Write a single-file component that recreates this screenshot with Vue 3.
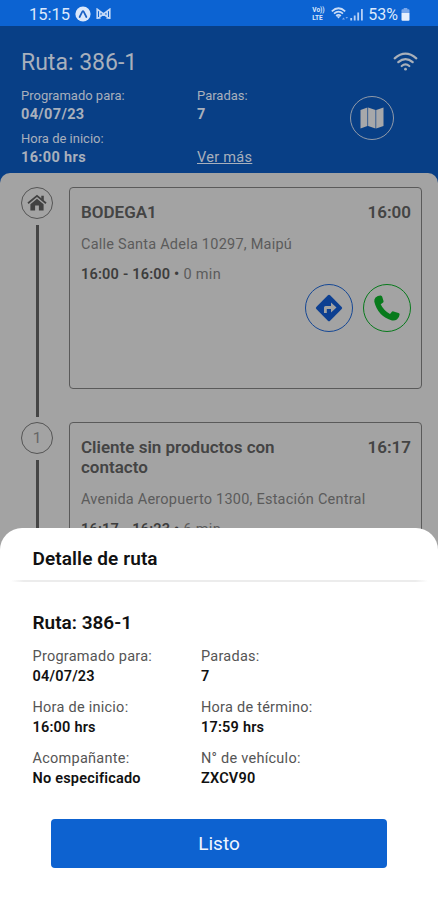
<script setup>
const headerFields = [
  { label: 'Programado para:', value: '04/07/23' },
  { label: 'Paradas:', value: '7' },
  { label: 'Hora de inicio:', value: '16:00 hrs' }
]
const stops = [
  { marker: 'home', name: 'BODEGA1', time: '16:00', address: 'Calle Santa Adela 10297, Maipú', range: '16:00 - 16:00', wait: '0 min' },
  { marker: '1', name: 'Cliente sin productos con contacto', time: '16:17', address: 'Avenida Aeropuerto 1300, Estación Central', range: '16:17 - 16:23', wait: '6 min' }
]
const details = [
  { label: 'Programado para:', value: '04/07/23' },
  { label: 'Paradas:', value: '7' },
  { label: 'Hora de inicio:', value: '16:00 hrs' },
  { label: 'Hora de término:', value: '17:59 hrs' },
  { label: 'Acompañante:', value: 'No especificado' },
  { label: 'N° de vehículo:', value: 'ZXCV90' }
]
</script>

<template>
  <div class="screen">
    <div class="status">
      <span class="clock">15:15</span>
      <svg class="app-icon" viewBox="0 0 16 16"><circle cx="8" cy="8" r="7.6" fill="#dbe8fb" /><path d="M4.600 11 7.300 5.600Q8 4.500 8.700 5.600L11.400 11" fill="none" stroke="#1c62c4" stroke-width="1.700" stroke-linecap="round" /></svg>
      <svg class="mail-icon" viewBox="0 0 15 12"><path d="M1.200 11V1.200L7.500 6l6.300-4.800V11M3.800 10.800V3.500M11.200 10.800V3.500M1.500 10.500 7.500 6l6 4.500" fill="none" stroke="#c3d8f6" stroke-width="1.600" /></svg>
      <span class="spacer"></span>
      <span class="volte"><span>Vo))</span><span>LTE</span></span>
      <svg class="status-wifi" viewBox="0 0 18 14"><g fill="none" stroke="#c9dcf7" stroke-width="1.700"><path d="M.8 4.300Q7.500-1.800 14.200 4.300" /><path d="M3 6.600q4.500-3.900 9 0" /><path d="M5.100 8.800q2.400-2 4.800 0" /></g><path d="m5.500 9.300 2 2.200 2-2.200z" fill="#c9dcf7" /><path d="M11 12.500l1.500-2 1.500 2zM14.500 10h2.500l-1.200 1.800z" fill="#7fabec" /></svg>
      <svg class="signal" viewBox="0 0 14 13"><path d="M1.200 12.500v-2.500M4.700 12.500V7.500M8.200 12.500V4.500M11.900 12.500V1" stroke="#b7d0f5" stroke-width="1.800" /></svg>
      <span class="percent">53%</span>
      <svg class="battery" viewBox="0 0 9 13"><path d="M2.700 0h3.600v1.300h1.200q1 0 1 1V5h-8V2.300q0-1 1-1h1.200z" fill="#7aa8ec" /><path d="M.5 5h8v6.800q0 1-1 1h-6q-1 0-1-1z" fill="#e8f0fd" /></svg>
    </div>

    <header class="header">
      <div class="header-top">
        <h1>Ruta: 386-1</h1>
        <svg class="wifi" viewBox="0 0 25 20"><g fill="none" stroke="#a9b0ba" stroke-width="2.200" stroke-linecap="round"><path d="M1.700 6.300Q12.500-3 23.300 6.300" /><path d="M5.300 10.200q7.200-6.200 14.400 0" /><path d="M8.700 14q3.800-3.200 7.600 0" /></g><circle cx="12.500" cy="17.200" r="1.400" fill="#a9b0ba" /></svg>
      </div>
      <div class="header-body">
        <div class="header-grid">
          <div v-for="f in headerFields" :key="f.label" class="hfield">
            <span>{{ f.label }}</span><b>{{ f.value }}</b>
          </div>
          <a class="more">Ver más</a>
        </div>
        <div class="map-button">
          <svg viewBox="0 0 24 22"><g fill="#a7a8aa"><path d="M.5 3 7.400.6v18.300L.5 21.500z" /><path d="m8.100.6 7.400 2.400v18.400l-7.400-2.400z" /><path d="M16.200 3 23.500.5V19l-7.300 2.500z" /></g></svg>
        </div>
      </div>
    </header>

    <main class="route">
      <div v-for="s in stops" :key="s.name" class="stop">
        <div class="rail">
          <div class="marker">
            <svg v-if="s.marker === 'home'" viewBox="0 0 20 18"><path d="M1 9.300 10 1.800l9 7.500" fill="none" stroke="#414141" stroke-width="1.800" /><path d="M14.300 1.800h2.500v5l-2.500-2zM10 4.800l6.600 5.500v6.200h-4.700v-5H8.100v5H3.400v-6.200z" fill="#414141" /></svg>
            <span v-else>{{ s.marker }}</span>
          </div>
          <div class="line"></div>
        </div>
        <article class="card">
          <div class="card-head"><h2>{{ s.name }}</h2><span class="hour">{{ s.time }}</span></div>
          <p class="address">{{ s.address }}</p>
          <p class="range"><b>{{ s.range }} •</b> {{ s.wait }}</p>
          <div class="actions">
            <div class="round nav">
              <svg viewBox="0 0 28 28"><path d="M12.900 1.300q1.100-1 2.200 0l11.600 11.600q1 1.100 0 2.200L15.100 26.700q-1.100 1-2.200 0L1.300 15.100q-1-1.100 0-2.200z" fill="#0d3f91" /><path d="M9 19v-5.500q0-1.500 1.500-1.500H16V8.500l5.500 5-5.500 5V15h-4.200v4z" fill="#a2a2a2" /></svg>
            </div>
            <div class="round call">
              <svg viewBox="0 0 26 26"><path d="M1.500 2.400Q3.800.3 6.700.4q1.200.1 1.500 1.300l1.300 4.200q.4 1.200-.7 1.900L6.700 9.300q2.900 6.200 9.300 9.800l1.700-2.200q.7-.9 1.800-.5l5 1.500q1.200.4 1.100 1.600-.2 3-2.700 5Q21 25.900 18 25.500 4 21.500.3 6.800 0 4 1.500 2.400z" fill="#087a1c" /></svg>
            </div>
          </div>
        </article>
      </div>
    </main>

    <section class="sheet">
      <h2 class="sheet-title">Detalle de ruta</h2>
      <div class="divider"></div>
      <h3>Ruta: 386-1</h3>
      <div class="details">
        <div v-for="d in details" :key="d.label" class="detail"><span>{{ d.label }}</span><b>{{ d.value }}</b></div>
      </div>
      <button>Listo</button>
    </section>
  </div>
</template>

<style>
body { margin: 0; }
</style>

<style scoped>
.screen { position: relative; width: 438px; height: 900px; overflow: hidden; background: #083f86; font-family: Roboto, sans-serif; display: flex; flex-direction: column; }
h1, h2, h3, p { margin: 0; }
.status { height: 26px; flex: none; box-sizing: border-box; background: #0c63d2; display: flex; align-items: center; padding: 2px 28px 0 29px; color: #dce9fc; font-size: 16.5px; }
.app-icon { width: 16px; height: 16px; margin-left: 5px; }
.mail-icon { width: 15px; height: 12px; margin-left: 5px; }
.spacer { flex: 1; }
.volte { display: flex; flex-direction: column; font-size: 6.5px; line-height: 8px; font-weight: 700; width: 14px; }
.status-wifi { width: 18px; height: 14px; margin-left: 5px; }
.signal { width: 14px; height: 13px; margin-left: 1px; }
.percent { margin-left: 4px; font-size: 16px; }
.battery { width: 9px; height: 13px; margin-left: 3px; }

.header { height: 147px; flex: none; box-sizing: border-box; padding: 23px 20px 0 21px; color: #a8b0bc; }
.header-top { display: flex; justify-content: space-between; height: 28px; }
h1 { font-size: 23px; line-height: 28px; font-weight: 400; }
.wifi { width: 25px; height: 20px; margin-top: 3px; }
.header-body { display: flex; justify-content: space-between; padding-top: 10px; }
.header-grid { display: grid; grid-template-columns: 176px 120px; row-gap: 6px; }
.hfield { display: flex; flex-direction: column; font-size: 13px; line-height: 18px; }
.hfield b { font-size: 14.5px; line-height: 19px; font-weight: 700; letter-spacing: 0.35px; }
.more { align-self: end; justify-self: start; font-size: 14.5px; line-height: 19px; letter-spacing: 0.3px; text-decoration: underline; }
.map-button { width: 44px; height: 44px; border: 1.5px solid #929ba9; border-radius: 50%; margin: 9px 24px 0 0; display: flex; align-items: center; justify-content: center; box-sizing: border-box; }
.map-button svg { width: 24px; height: 22px; }

.route { flex: 1; background: #a3a3a3; border-radius: 10px 10px 0 0; padding: 14px 16px 0 21px; }
.stop { display: flex; height: 235px; }
.rail { width: 32px; display: flex; flex-direction: column; align-items: center; margin-right: 16px; }
.marker { width: 32px; height: 32px; flex: none; box-sizing: border-box; border: 1px solid #555; border-radius: 50%; display: flex; align-items: center; justify-content: center; color: #666; font-size: 15.5px; }
.marker svg { width: 20px; height: 18px; }
.line { width: 3px; flex: 1; background: #454545; margin: 6px 0 5px; }
.card { flex: 1; height: 202px; box-sizing: border-box; border: 1px solid #5a5a5a; border-radius: 4px; padding: 14px 10px 0 11px; color: #5b5b5b; }
.card-head { display: flex; justify-content: space-between; color: #444; font-weight: 600; font-size: 17px; line-height: 20px; }
.card-head h2 { font: inherit; width: 210px; }
.address { margin-top: 13px; font-size: 14.5px; line-height: 20px; letter-spacing: 0.23px; white-space: nowrap; }
.range { margin-top: 10px; font-size: 14.5px; line-height: 20px; letter-spacing: 0.33px; }
.range b { color: #3d3d3d; font-weight: 600; letter-spacing: 0.2px; }
.actions { display: flex; justify-content: flex-end; gap: 10px; margin-top: -1px; }
.round { width: 48px; height: 48px; box-sizing: border-box; border: 1.5px solid; border-radius: 50%; display: flex; align-items: center; justify-content: center; }
.nav { border-color: #164895; }
.call { border-color: #087a1c; }
.nav svg { width: 28px; height: 28px; }
.call svg { width: 26px; height: 26px; }

.sheet { position: absolute; left: 0; right: 0; bottom: 0; height: 372px; box-sizing: border-box; background: #fff; border-radius: 22px 22px 0 0; padding: 20px 0 0 32.500px; color: #111; }
.sheet-title { font-size: 19px; line-height: 22px; font-weight: 600; letter-spacing: 0.1px; }
.divider { height: 2px; margin: 10px 10px 0 -22px; background: linear-gradient(90deg, #fff, #ececec 3%, #ececec 97%, #fff); }
h3 { margin-top: 30px; font-size: 19px; line-height: 22px; font-weight: 600; }
.details { display: grid; grid-template-columns: 168.500px 1fr; row-gap: 11px; margin-top: 13px; }
.detail { display: flex; flex-direction: column; font-size: 14.5px; line-height: 20px; letter-spacing: 0.25px; color: #555; }
.detail b { color: #111; font-weight: 600; letter-spacing: 0.2px; }
button { display: block; width: 336px; height: 49px; margin: 30px 0 0 18.500px; padding: 0; border: 0; border-radius: 4px; background: #0d62d0; color: #f0f6ff; font-family: inherit; font-size: 19px; }
</style>
